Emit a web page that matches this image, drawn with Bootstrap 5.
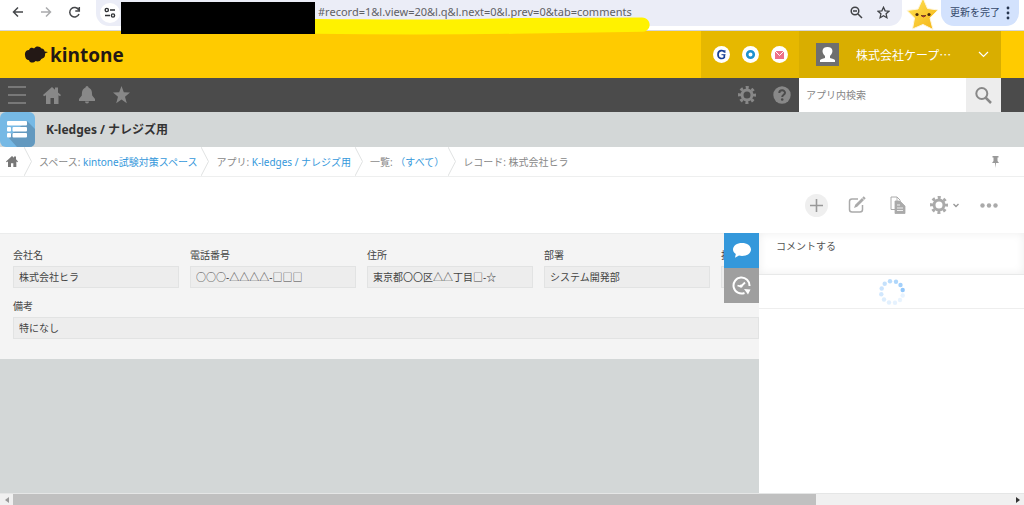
<!DOCTYPE html>
<html lang="ja">
<head>
<meta charset="utf-8">
<meta name="viewport" content="width=device-width, initial-scale=1">
<title>K-ledges / ナレジズ用</title>
<link href="https://cdn.jsdelivr.net/npm/bootstrap@5.3.0/dist/css/bootstrap.min.css" rel="stylesheet">
<style>
body{font-family:"Noto Sans","Noto Sans CJK JP",sans-serif;font-size:10px;line-height:16px;color:#444;background:#fff;overflow:hidden}
svg{display:block;flex:none}
button{border:0;background:none;padding:0;color:inherit;flex:none}
a{color:#3498db;text-decoration:none}
/* browser chrome */
.chrome{height:31px;border-bottom:1px solid #d5d6da;color:#45474a}
.chrome-nav{width:96px;height:24px;padding-left:12px;gap:16px}
.omnibox{height:26px;background:#ebedf7;border-radius:0 0 13px 13px;padding-left:4px;padding-right:12px;gap:14px}
.site-btn{width:20px;height:20px;border-radius:50%;background:#fff}
.url{font-size:11px;color:#5f6165;padding:0 0 4px 182px;background:transparent;border:0;outline:0;min-width:0;height:26px}
.redact{left:121px;top:2px;width:194px;height:32px;background:#000;z-index:3}
.marker{left:315px;top:17px;z-index:2}
.update{height:26px;margin-right:5px;background:#d3e2fd;border-radius:0 0 13px 13px;color:#35496b;width:78px;gap:6px;font-family:"Liberation Sans","Noto Sans CJK JP",sans-serif}
.mascot{width:39px;height:31px}
/* header */
.brandbar{height:47px;background:#ffcb00;padding-right:23px}
.brand-link{color:#231815;font-size:19px;font-weight:700;line-height:24px;padding-left:24px;gap:2px;font-family:"Open Sans","Noto Sans",sans-serif}
.services{background:#e6b800;width:98px;gap:12px}
.service{width:17px;height:17px;border-radius:50%;background:#fff}
.account{background:#d9ae00;width:202px;color:#fff;font-size:12px;padding:0 12px 0 17px;font-family:"Noto Sans CJK JP",sans-serif}
.avatar{width:23px;height:23px;background:#6f6f6f;margin-right:17px}
.toolbar-dark{height:34px;background:#4b4b4b;color:#888;padding-right:23px}
.left-icons{padding-left:8px;gap:17px}
.right-icons{gap:17px;padding-right:8px}
.search-box{width:202px}
.search-box input{border:0;padding:0 7px;font-size:10px;min-width:0;color:#555;outline:0}
.search-box input::placeholder{color:#858585}
.search-box button{width:35px;background:#ededed;color:#888}
.titlebar{height:35px;background:#d3d7d7;gap:11px}
.titlebar h1{font-size:12px;line-height:20px;font-weight:700;color:#333;margin:0}
.crumbs{height:30px;border-bottom:1px solid #eeefef;color:#888}
.crumbs ol{list-style:none;margin:0;padding:0}
.home-crumb{padding-left:6px;gap:6px}
.crumb-text{padding:0 4px 0 6px}
.pin{margin-right:24px}
.actions{height:56px;gap:20px;color:#aaa;padding-right:26px}
.add{width:23px;height:23px;border-radius:50%;background:#efefef}
/* record */
.workspace{background:#d3d7d7}
.record{background:#f4f4f4;border-top:1px solid #ebecec;padding:12px 0 20px 13px}
.field-row{gap:11px;margin-bottom:9px}
.field{width:166px;flex:none}
.field label,.wide label{display:block;line-height:18px;margin-bottom:2px}
.field input,.wide input{display:block;width:100%;height:22px;background:#ededed;border:1px solid #e2e3e3;padding:0 5px 1px;color:#444;outline:0;border-radius:0}
.side-tabs{right:0;top:0;width:35px;z-index:2}
.side-tabs button{width:35px;height:35px;background:#9f9f9f;color:#fff}
.side-tabs .active{background:#3498db}
.panel{width:265px;flex:none;background:#fff}
.panel textarea{display:block;width:100%;height:42px;border:0;border-bottom:1px solid #e8e9e9;box-shadow:inset 0 0 10px #eee;padding:4px 17px;resize:none;outline:0;overflow:hidden;line-height:18px;border-radius:0}
.panel textarea::placeholder{color:#555}
.loading{height:34px;border-bottom:1px solid #eee}
.scroller{height:12px;background:#f0f0f0;border-top:1px solid #e5e6e6}
.thumb{background:#c0c0c0}
.arrow-end{width:13px}
</style>
</head>
<body class="d-flex flex-column vh-100">
<div class="chrome position-relative d-flex align-items-start">
  <div class="chrome-nav d-flex align-items-center">
    <button aria-label="戻る"><svg width="12" height="12" viewBox="0 0 12 12" fill="none" stroke="#45474a" stroke-width="1.5"><path d="M11 6H2M6 1.5 1.5 6 6 10.5"/></svg></button>
    <button aria-label="進む"><svg width="12" height="12" viewBox="0 0 12 12" fill="none" stroke="#aaabad" stroke-width="1.5"><path d="M1 6h9M6 1.5 10.5 6 6 10.5"/></svg></button>
    <button aria-label="再読み込み"><svg width="13" height="13" viewBox="0 0 13 13" fill="none" stroke="#45474a" stroke-width="1.5"><path d="M11 8a4.8 4.8 0 1 1-.3-4.2M11.3 1v4h-4"/></svg></button>
  </div>
  <div class="omnibox d-flex align-items-center flex-grow-1">
    <div class="d-flex align-items-center flex-grow-1">
      <button class="site-btn d-flex align-items-center justify-content-center" aria-label="サイト情報"><svg width="12" height="12" viewBox="0 0 12 12" fill="none" stroke="#303235" stroke-width="1.4"><circle cx="2.8" cy="3" r="1.6"/><circle cx="9" cy="8.5" r="1.6"/><path d="M6 3h5M1 8.5h5"/></svg></button>
      <input class="url flex-grow-1 ms-3" aria-label="アドレス" value="#record=1&amp;l.view=20&amp;l.q&amp;l.next=0&amp;l.prev=0&amp;tab=comments">
    </div>
    <button aria-label="ズーム"><svg width="13" height="15" viewBox="0 0 13 15" fill="none" stroke="#404246" stroke-width="1.5"><circle cx="5" cy="5" r="3.8"/><path d="m8 8 4 4M3 5h4"/></svg></button>
    <button aria-label="ブックマーク"><svg width="13" height="15" viewBox="0 0 13 15" fill="none" stroke="#404246" stroke-width="1.3"><path d="m6.500 1.300 1.600 3.500 3.900.4-2.900 2.600.8 3.900-3.400-2-3.400 2 .8-3.900L1 5.200l3.900-.4z"/></svg></button>
  </div>
  <svg class="mascot" viewBox="0 0 39 31"><defs><linearGradient id="gold" x2="1" y2="1"><stop stop-color="#ffe45a"/><stop offset="1" stop-color="#f4b312"/></linearGradient></defs><path d="M21 -2 25.500 8.500 36 10l-8 8 3 11.500-10-5-10.500 4.500 2-11L5 10.500l11-1.500z" fill="url(#gold)" stroke="#fff6dc" stroke-width="1" stroke-linejoin="round"/><circle cx="15" cy="14.500" r="1.600" fill="#4a2a10"/><circle cx="27" cy="14.500" r="1.600" fill="#4a2a10"/><path d="M19 15.500h5q-2.500 3-5 0z" fill="#d5294d" stroke="#4a2a10" stroke-width=".6"/></svg>
  <button class="update d-flex align-items-center justify-content-center">更新を完了<svg width="4" height="14" viewBox="0 0 4 14" fill="#26354f"><circle cx="2" cy="2" r="1.400"/><circle cx="2" cy="7" r="1.400"/><circle cx="2" cy="12" r="1.400"/></svg></button>
  <svg class="marker position-absolute" width="335" height="18" viewBox="0 0 335 18"><path d="M0 2C70 2.500 140 3 200 1L327 .6C337 1 337 14 328 14.800L200 16.800Q100 18 0 16.800z" fill="#fff200"/></svg>
  <div class="redact position-absolute"></div>
</div>

<header class="brandbar d-flex">
  <a class="brand-link d-flex align-items-center me-auto" href="#"><svg width="24" height="18" viewBox="0 0 24 18" fill="#231815"><path d="M1 9C.5 6 2.500 4 5 4c1-3 4-2.500 5-1.500C12-.5 16 0 17.500 2.500c2 0 3 1.500 3.200 3L24 6l-3 1.500c.5 3-1 5-3.700 5.500-1 2.500-3.800 3-5.800 2-2 2.500-6 2-6.500-.8C2.500 14 1 12 1 9z"/></svg>kintone</a>
  <nav class="services d-flex align-items-center justify-content-center" aria-label="サービス">
    <a class="service" href="#" aria-label="Garoon"><svg width="17" height="17" viewBox="0 0 17 17" fill="none" stroke="#173f98"><path d="M11.500 6.200C10.600 3.900 5 3.600 5 8.500c0 4.700 4.800 4.500 6.300 3V9" stroke-width="1.700"/><path d="M8.500 8.700h4M11.900 4v3" stroke-width="1"/></svg></a>
    <a class="service" href="#" aria-label="Office"><svg width="17" height="17" viewBox="0 0 17 17" fill="none" stroke="#1d91d0" stroke-width="2.600"><circle cx="8.500" cy="8.500" r="3.300"/></svg></a>
    <a class="service" href="#" aria-label="Mail"><svg width="17" height="17" viewBox="0 0 17 17"><rect x="4" y="5" width="9" height="8" fill="#ee7189"/><path d="m4 5 4.500 4.500L13 5" fill="none" stroke="#fff"/></svg></a>
  </nav>
  <button class="account d-flex align-items-center">
    <svg class="avatar" viewBox="0 0 23 23" fill="#fff"><path d="M4 19v-2q1-1 5-2v-2C5 9 6 4 11.500 4S18 9 14 13v2q4 1 5 2v2z"/></svg>
    <span class="me-auto text-nowrap">株式会社ケープ…</span>
    <svg width="11" height="7" viewBox="0 0 11 7" fill="none" stroke="#fff" stroke-width="1.200"><path d="m1 1 4.500 4.500L10 1"/></svg>
  </button>
</header>

<nav class="toolbar-dark d-flex" aria-label="メイン">
  <div class="left-icons d-flex align-items-center me-auto">
    <button aria-label="メニュー"><svg width="18" height="18" viewBox="0 0 18 18" stroke="#888" stroke-width="1.600"><path d="M0 1h18M0 9h18M0 17h18"/></svg></button>
    <button aria-label="ホーム"><svg width="18" height="18" viewBox="0 0 18 18" fill="#888"><path d="M9 1l3 2.700V1.500h3v5L18 9l-1 1.200-1.500-1V18H11v-6H7.500v6H3V9.200l-2 1L0 9z"/></svg></button>
    <button aria-label="通知"><svg width="18" height="18" viewBox="0 0 18 18" fill="#888"><path d="M7.500 1.500a1.500 1.500 0 0 1 3 0C14 3 14 6 14.200 9.500L17 13v2H1v-2l2.800-3.500C4 6 4 3 7.500 1.500zM7 15.500h4a2 2 0 0 1-4 0z"/></svg></button>
    <button aria-label="お気に入り"><svg width="17" height="18" viewBox="0 0 17 18" fill="#888"><path d="m8.500 0 2.300 6.200L17 6.500l-5 4.200 1.800 6.600-5.300-3.700-5.300 3.700L5 10.700 0 6.500l6.200-.3z"/></svg></button>
  </div>
  <div class="right-icons d-flex align-items-center">
    <button aria-label="設定"><svg width="18" height="18" viewBox="0 0 18 18" fill="none" stroke="#888"><circle cx="9" cy="9" r="5" stroke-width="3"/><circle cx="9" cy="9" r="7.500" stroke-width="3" stroke-dasharray="3 2.890" stroke-dashoffset="1.500"/></svg></button>
    <button aria-label="ヘルプ"><svg width="18" height="18" viewBox="0 0 18 18"><circle cx="9" cy="9" r="8.700" fill="#888"/><path d="M6.300 7C6.300 3.500 12 3.500 12 6.800 12 8.800 9.200 8.800 9.200 11" fill="none" stroke="#4b4b4b" stroke-width="2"/><circle cx="9.200" cy="13.500" r="1.300" fill="#4b4b4b"/></svg></button>
  </div>
  <form class="search-box d-flex">
    <input class="flex-grow-1" type="search" placeholder="アプリ内検索" aria-label="アプリ内検索">
    <button class="d-flex align-items-center justify-content-center" type="button" aria-label="検索"><svg width="17" height="17" viewBox="0 0 17 17" fill="none" stroke="#888" stroke-width="2"><circle cx="6.800" cy="6.500" r="5.500"/><path d="m10.500 10.500 5.500 5.500" stroke-width="2.500"/></svg></button>
  </form>
</nav>

<div class="titlebar d-flex align-items-center">
  <svg width="35" height="35" viewBox="0 0 35 35"><rect width="35" height="35" rx="6" fill="#76b9e5"/><path d="M27 9l8 8v12q0 6-6 6H17l-9-10z" fill="#6399bf"/><g fill="#fff"><rect x="7" y="9" width="20" height="4.500" rx="1"/><rect x="7" y="15" width="4" height="4.500" rx="1"/><rect x="12.500" y="15" width="14.500" height="4.500" rx="1"/><rect x="7" y="21" width="4" height="4.500" rx="1"/><rect x="12.500" y="21" width="14.500" height="4.500" rx="1"/></g></svg>
  <h1>K-ledges / ナレジズ用</h1>
</div>

<nav class="crumbs d-flex align-items-center" aria-label="パンくず">
  <ol class="d-flex align-items-center me-auto text-nowrap">
    <li class="home-crumb d-flex align-items-center"><a href="#" aria-label="ホーム"><svg width="12" height="11" viewBox="0 0 18 18" preserveAspectRatio="none" fill="#777"><path d="M9 0l3 2.700V1h3v4.500L18 9l-1 1.200-1.500-1V18H11v-6H7.500v6H3V9.200l-2 1L0 9z"/></svg></a><svg width="9" height="29" viewBox="0 0 9 29" fill="none" stroke="#e0e3e3"><path d="m0 0 7.500 14.500L0 29"/></svg></li>
    <li class="d-flex align-items-center"><span class="crumb-text">スペース: <a href="#">kintone試験対策スペース</a></span><svg width="9" height="29" viewBox="0 0 9 29" fill="none" stroke="#e0e3e3"><path d="m0 0 7.500 14.500L0 29"/></svg></li>
    <li class="d-flex align-items-center"><span class="crumb-text">アプリ: <a href="#">K-ledges / ナレジズ用</a></span><svg width="9" height="29" viewBox="0 0 9 29" fill="none" stroke="#e0e3e3"><path d="m0 0 7.500 14.500L0 29"/></svg></li>
    <li class="d-flex align-items-center"><span class="crumb-text">一覧: <a href="#">（すべて）</a></span><svg width="9" height="29" viewBox="0 0 9 29" fill="none" stroke="#e0e3e3"><path d="m0 0 7.500 14.500L0 29"/></svg></li>
    <li><span class="crumb-text">レコード: 株式会社ヒラ</span></li>
  </ol>
  <button class="pin" aria-label="固定"><svg width="9" height="12" viewBox="0 0 9 12" fill="#999"><path d="M1.500 0h6v1.500H6.500V5L8 7H5l-.5 5L4 7H1l1.500-2V1.500h-1z"/></svg></button>
</nav>

<div class="actions d-flex align-items-center justify-content-end">
  <button class="add d-flex align-items-center justify-content-center" aria-label="追加"><svg width="13" height="13" viewBox="0 0 13 13" stroke="#999" stroke-width="1.600"><path d="M6.500 0v13M0 6.500h13"/></svg></button>
  <button aria-label="編集"><svg width="18" height="18" viewBox="0 0 18 18" fill="none" stroke="#aaa" stroke-width="1.500"><path d="M10 3H4Q1.500 3 1.500 5.500v8Q1.500 16 4 16h8q2.500 0 2.500-2.500V9"/><path d="m6 12 1.200-3.200L14 2l2 2-6.800 6.800z" fill="#aaa" stroke="none"/><path d="m15 1 2 2" stroke-width="2"/></svg></button>
  <button aria-label="複製"><svg class="ms-1" width="16" height="18" viewBox="0 0 16 18"><path d="M5 13.500H1V1h6l3.500 3.500" fill="none" stroke="#aaa"/><path d="M7 1v4M5 5h5l5 5v7.500H5z" fill="#aaa" stroke="#aaa" stroke-width=".8"/><path d="M7 9h3M7 12h6M7 14.500h6" stroke="#eee"/></svg></button>
  <button class="d-flex align-items-center gap-1 ms-1" aria-label="オプション"><svg width="18" height="18" viewBox="0 0 18 18" fill="none" stroke="#aaa"><circle cx="9" cy="9" r="5" stroke-width="3"/><circle cx="9" cy="9" r="7.500" stroke-width="3" stroke-dasharray="3 2.890" stroke-dashoffset="1.500"/></svg><svg width="8" height="5" viewBox="0 0 8 5" fill="none" stroke="#999" stroke-width="1.400"><path d="m1.500 1 2.500 2.500L6.500 1"/></svg></button>
  <button aria-label="その他"><svg width="18" height="5" viewBox="0 0 18 5" fill="#aaa"><circle cx="2.500" cy="2.500" r="2.200"/><circle cx="9" cy="2.500" r="2.200"/><circle cx="15.500" cy="2.500" r="2.200"/></svg></button>
</div>

<main class="workspace d-flex flex-grow-1">
  <section class="position-relative flex-grow-1 overflow-hidden">
    <div class="record">
      <div class="field-row d-flex">
        <div class="field"><label for="f1">会社名</label><input id="f1" readonly value="株式会社ヒラ"></div>
        <div class="field"><label for="f2">電話番号</label><input id="f2" readonly value="○○○-△△△△-□□□"></div>
        <div class="field"><label for="f3">住所</label><input id="f3" readonly value="東京都〇〇区△△丁目□-☆"></div>
        <div class="field"><label for="f4">部署</label><input id="f4" readonly value="システム開発部"></div>
        <div class="field"><label for="f5">担</label><input id="f5" readonly></div>
      </div>
      <div class="wide"><label for="f6">備考</label><input id="f6" readonly value="特になし"></div>
    </div>
    <div class="side-tabs position-absolute d-flex flex-column">
      <button class="active d-flex align-items-center justify-content-center" aria-label="コメント"><svg width="18" height="15" viewBox="0 0 18 15" fill="#fff"><path d="M9 0c5 0 9 2.700 9 6.500S14 13 9 13q-1.500 0-3-.4L2 14.800l.8-3.800C1 9.800 0 8.300 0 6.500 0 2.700 4 0 9 0z"/></svg></button>
      <button class="d-flex align-items-center justify-content-center" aria-label="変更履歴"><svg width="19" height="19" viewBox="0 0 19 19" fill="none" stroke="#fff"><path d="M12.500 17A8 8 0 1 1 17.500 10" stroke-width="2"/><path d="M5.500 9.500 9 10.500l4-4" stroke-width="1.800"/><circle cx="9" cy="10" r="1.600" fill="#fff" stroke="none"/><path d="M12 13l6.500 .5-2.500 5z" fill="#fff" stroke="none"/></svg></button>
    </div>
  </section>
  <aside class="panel">
    <textarea placeholder="コメントする" aria-label="コメントする"></textarea>
    <div class="loading d-flex align-items-center justify-content-center" role="status" aria-label="読み込み中">
      <svg width="26" height="26" viewBox="-13 -13 26 26" fill="#8cc4fa"><circle cx="10.700" cy="-2" r="2.200" opacity=".95"/><circle cx="8.500" cy="-7" r="2.200" opacity=".8"/><circle cx="4" cy="-10.300" r="2.200" opacity=".7"/><circle cx="-2" cy="-10.700" r="2.200" opacity=".6"/><circle cx="-7.300" cy="-8.300" r="2.200" opacity=".5"/><circle cx="-10.300" cy="-3.500" r="2.200" opacity=".45"/><circle cx="-10.700" cy="2.300" r="2.200" opacity=".4"/><circle cx="-8" cy="7.500" r="2.200" opacity=".3"/><circle cx="-3" cy="10.500" r="2.200" opacity=".25"/><circle cx="3" cy="10.700" r="2.200" opacity=".22"/><circle cx="8" cy="8" r="2.200" opacity=".2"/><circle cx="10.700" cy="3.500" r="2.200" opacity=".2"/></svg>
    </div>
  </aside>
</main>

<div class="scroller d-flex align-items-stretch">
  <div class="arrow-end d-flex align-items-center justify-content-center"><svg width="4" height="6" viewBox="0 0 4 6" fill="#999"><path d="M4 0v6L0 3z"/></svg></div>
  <div class="flex-grow-1 d-flex"><div class="thumb" style="width:80.5%"></div></div>
  <div class="arrow-end d-flex align-items-center justify-content-center"><svg width="4" height="6" viewBox="0 0 4 6" fill="#333"><path d="M0 0v6l4-3z"/></svg></div>
</div>
<script src="https://cdn.jsdelivr.net/npm/bootstrap@5.3.0/dist/js/bootstrap.bundle.min.js"></script>
</body>
</html>
